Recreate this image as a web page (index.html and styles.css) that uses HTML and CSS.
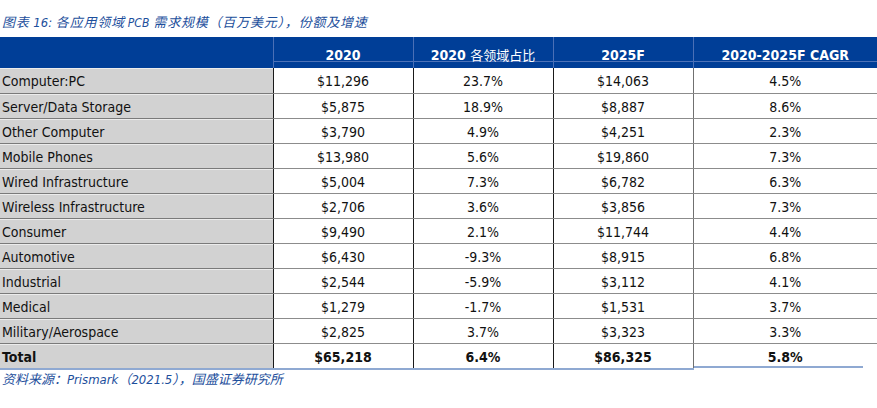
FILE: index.html
```html
<!DOCTYPE html>
<html lang="zh">
<head>
<meta charset="utf-8">
<link rel="stylesheet" href="styles.css">
</head>
<body>
<div class="page">
  <div class="title">图表 <span class="lat">16:</span> 各应用领域<span class="lat pcb">PCB</span>需求规模（百万美元），份额及增速</div>
  <table class="data">
    <colgroup>
      <col class="c1"><col class="c2"><col class="c3"><col class="c4"><col class="c5">
    </colgroup>
    <thead>
      <tr>
        <th class="corner"></th>
        <th>2020</th>
        <th>2020 <span class="cjk">各领域占比</span></th>
        <th>2025F</th>
        <th>2020-2025F CAGR</th>
      </tr>
    </thead>
    <tbody>
      <tr><td class="name">Computer:PC</td><td>$11,296</td><td>23.7%</td><td>$14,063</td><td>4.5%</td></tr>
      <tr><td class="name">Server/Data Storage</td><td>$5,875</td><td>18.9%</td><td>$8,887</td><td>8.6%</td></tr>
      <tr><td class="name">Other Computer</td><td>$3,790</td><td>4.9%</td><td>$4,251</td><td>2.3%</td></tr>
      <tr><td class="name">Mobile Phones</td><td>$13,980</td><td>5.6%</td><td>$19,860</td><td>7.3%</td></tr>
      <tr><td class="name">Wired Infrastructure</td><td>$5,004</td><td>7.3%</td><td>$6,782</td><td>6.3%</td></tr>
      <tr><td class="name">Wireless Infrastructure</td><td>$2,706</td><td>3.6%</td><td>$3,856</td><td>7.3%</td></tr>
      <tr><td class="name">Consumer</td><td>$9,490</td><td>2.1%</td><td>$11,744</td><td>4.4%</td></tr>
      <tr><td class="name">Automotive</td><td>$6,430</td><td>-9.3%</td><td>$8,915</td><td>6.8%</td></tr>
      <tr><td class="name">Industrial</td><td>$2,544</td><td>-5.9%</td><td>$3,112</td><td>4.1%</td></tr>
      <tr><td class="name">Medical</td><td>$1,279</td><td>-1.7%</td><td>$1,531</td><td>3.7%</td></tr>
      <tr><td class="name">Military/Aerospace</td><td>$2,825</td><td>3.7%</td><td>$3,323</td><td>3.3%</td></tr>
      <tr class="total"><td class="name">Total</td><td>$65,218</td><td>6.4%</td><td>$86,325</td><td>5.8%</td></tr>
    </tbody>
  </table>
  <div class="source">资料来源：<span class="lat">Prismark</span>（<span class="lat">2021.5</span>），国盛证券研究所</div>
</div>
</body>
</html>
```

FILE: styles.css
```css
html, body {
  margin: 0;
  padding: 0;
  background: #ffffff;
}
.page {
  width: 877px;
  height: 408px;
  overflow: hidden;
  font-family: "DejaVu Sans Condensed", "DejaVu Sans", "Noto Sans CJK SC", sans-serif;
}
.title {
  height: 37px;
  box-sizing: border-box;
  padding: 13px 0 0 2px;
  font-family: "Noto Sans CJK SC", sans-serif;
  font-style: italic;
  font-size: 13px;
  line-height: 18px;
  color: #1d4f9c;
  letter-spacing: 0.8px;
  white-space: nowrap;
}
.title .lat,
.source .lat {
  font-family: "DejaVu Sans Condensed", "DejaVu Sans", sans-serif;
  letter-spacing: 0;
}
.title .pcb {
  font-size: 12px;
  margin: 0 4px 0 3px;
}
.data {
  border-collapse: collapse;
  table-layout: fixed;
  width: 877px;
  font-size: 14px;
}
.c1 { width: 273px; }
.c2 { width: 140px; }
.c3 { width: 140px; }
.c4 { width: 140px; }
.c5 { width: 184px; }
.data th {
  height: 31px;
  padding: 0 0 1px;
  box-sizing: border-box;
  background: #003e97;
  color: #ffffff;
  font-weight: bold;
  font-size: 14px;
  text-align: center;
  vertical-align: bottom;
  line-height: 24px;
  border-left: 1px solid #4a6fb6;
  box-shadow: inset 0 -6px #003e97, inset 0 -7px #4d72b8;
}
.data th.corner {
  border-left: none;
  box-shadow: none;
}
.data th .cjk {
  font-family: "Noto Sans CJK SC", sans-serif;
  font-weight: normal;
  font-size: 13px;
}
.data td {
  height: 25px;
  box-sizing: border-box;
  padding: 2px 0 0;
  text-align: center;
  line-height: 22px;
  color: #111111;
  border-bottom: 1px solid #8c8c8c;
  border-left: 1px solid #1a1a1a;
  background: #ffffff;
}
.data td:nth-child(5) {
  border-left-color: #707070;
}
.data td.name {
  text-align: left;
  padding-left: 2px;
  background: #d2d2d2;
  border-left: none;
  border-bottom: 1px solid #7a7a7a;
  box-shadow: inset 0 1px #ececec;
}
.data tr.total td {
  font-weight: bold;
  border-bottom: 2px solid #8fa9d2;
}
.data tr.total td:nth-child(5) {
  border-bottom-color: transparent;
  background-image: linear-gradient(#8fa9d2, #8fa9d2);
  background-size: 169px 2px;
  background-position: left bottom;
  background-repeat: no-repeat;
}
.source {
  padding: 1px 0 0 2px;
  font-family: "Noto Sans CJK SC", sans-serif;
  font-style: italic;
  font-size: 13px;
  line-height: 16px;
  color: #1d4f9c;
  white-space: nowrap;
}
```
